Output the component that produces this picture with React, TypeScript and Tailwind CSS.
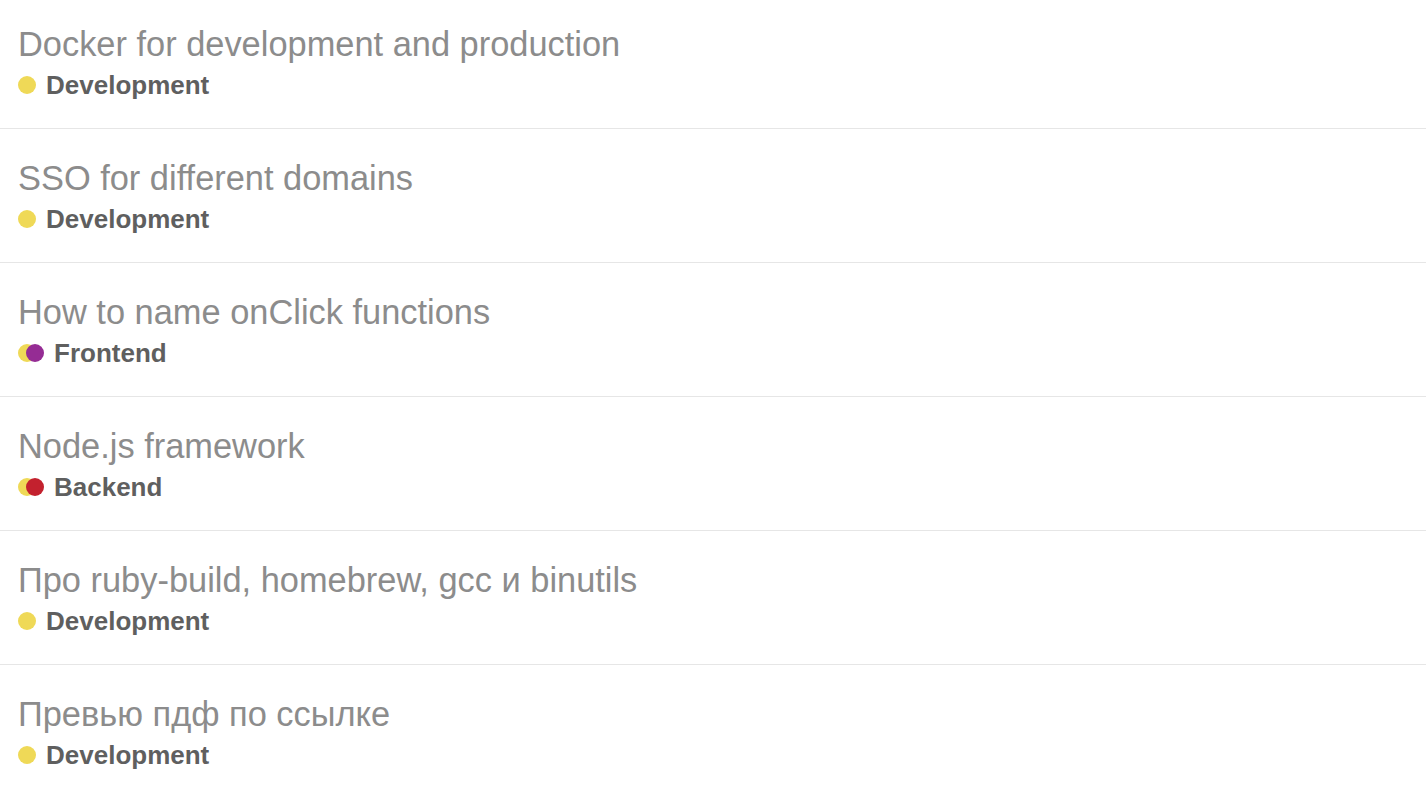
import React from 'react';

interface Topic {
  id: number;
  title: string;
  tag: string;
  colors: string[];
}

const topics: Topic[] = [
  { id: 1, title: 'Docker for development and production', tag: 'Development', colors: ['bg-[#efd957]'] },
  { id: 2, title: 'SSO for different domains', tag: 'Development', colors: ['bg-[#efd957]'] },
  { id: 3, title: 'How to name onClick functions', tag: 'Frontend', colors: ['bg-[#efd957]', 'bg-[#952c94]'] },
  { id: 4, title: 'Node.js framework', tag: 'Backend', colors: ['bg-[#efd957]', 'bg-[#c3212e]'] },
  { id: 5, title: 'Про ruby-build, homebrew, gcc и binutils', tag: 'Development', colors: ['bg-[#efd957]'] },
  { id: 6, title: 'Превью пдф по ссылке', tag: 'Development', colors: ['bg-[#efd957]'] },
];

export default function App() {
  return (
    <div className="min-h-screen bg-white overflow-hidden font-['Liberation_Sans',Arial,sans-serif]">
      <div className="-mt-[5px]">
        {topics.map((topic) => (
          <div key={topic.id} className="pl-[18px] pt-[31px] pb-[29px] border-b border-[#e6e6e6]">
            <p className="text-[34.4px] leading-[36px] text-[#8c8c8c]">{topic.title}</p>
            <div className="mt-[9px] flex items-center h-[28px]">
              <div className="flex">
                {topic.colors.map((c, i) => (
                  <span
                    key={i}
                    className={`w-[18px] h-[18px] rounded-full ${c} ${i > 0 ? '-ml-[10px]' : ''}`}
                  />
                ))}
              </div>
              <span className="ml-[10px] text-[26px] leading-[28px] font-bold text-[#5f5f5f]">{topic.tag}</span>
            </div>
          </div>
        ))}
      </div>
    </div>
  );
}
